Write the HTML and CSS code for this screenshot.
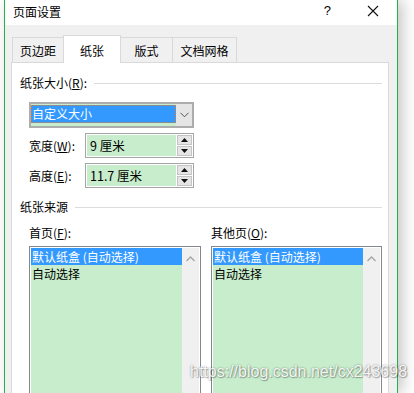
FILE: index.html
```html
<!DOCTYPE html>
<html lang="zh">
<head>
<meta charset="utf-8">
<link rel="stylesheet" href="styles.css">
</head>
<body>
<div class="window">
  <div class="titlebar">
    <span class="title">页面设置</span>
    <span class="help">?</span>
    <svg class="close" width="12" height="12" viewBox="0 0 12 12"><path d="M1 1L11 11M11 1L1 11" stroke="#111" stroke-width="1.1" fill="none"/></svg>
  </div>
  <div class="body">
    <div class="tabs">
      <div class="tab t1">页边距</div>
      <div class="tab active">纸张</div>
      <div class="tab t3">版式</div>
      <div class="tab t4">文档网格</div>
    </div>
    <div class="panel">
      <div class="group-head"><span>纸张大小(<u>R</u>):</span><i class="rule"></i></div>
      <div class="combo">
        <div class="combo-field"><span class="sel">自定义大小</span></div>
        <div class="combo-btn"><svg width="9" height="6" viewBox="0 0 9 6"><path d="M0.5 0.8L4.5 4.8L8.5 0.8" stroke="#555" stroke-width="1" fill="none"/></svg></div>
      </div>
      <div class="spin-row">
        <span class="lbl">宽度(<u>W</u>):</span>
        <div class="spin">
          <div class="spin-field">9 厘米</div>
          <div class="spin-btns">
            <div class="sb"><svg width="7" height="4" viewBox="0 0 7 4"><path d="M3.5 0L7 4H0Z" fill="#111"/></svg></div>
            <div class="sb"><svg width="7" height="4" viewBox="0 0 7 4"><path d="M0 0H7L3.5 4Z" fill="#111"/></svg></div>
          </div>
        </div>
      </div>
      <div class="spin-row">
        <span class="lbl">高度(<u>E</u>):</span>
        <div class="spin">
          <div class="spin-field">11.7 厘米</div>
          <div class="spin-btns">
            <div class="sb"><svg width="7" height="4" viewBox="0 0 7 4"><path d="M3.5 0L7 4H0Z" fill="#111"/></svg></div>
            <div class="sb"><svg width="7" height="4" viewBox="0 0 7 4"><path d="M0 0H7L3.5 4Z" fill="#111"/></svg></div>
          </div>
        </div>
      </div>
      <div class="group-head g2"><span>纸张来源</span><i class="rule"></i></div>
      <div class="sources">
        <div class="src">
          <div class="src-lbl">首页(<u>F</u>):</div>
          <div class="list">
            <div class="items">
              <div class="item on">默认纸盒 (自动选择)</div>
              <div class="item">自动选择</div>
            </div>
            <div class="scroll"><svg width="9" height="6" viewBox="0 0 9 6"><path d="M0.5 5L4.5 1L8.5 5" stroke="#a6a6a6" stroke-width="1.4" fill="none"/></svg></div>
          </div>
        </div>
        <div class="src">
          <div class="src-lbl">其他页(<u>O</u>):</div>
          <div class="list">
            <div class="items">
              <div class="item on">默认纸盒 (自动选择)</div>
              <div class="item">自动选择</div>
            </div>
            <div class="scroll"><svg width="9" height="6" viewBox="0 0 9 6"><path d="M0.5 5L4.5 1L8.5 5" stroke="#a6a6a6" stroke-width="1.4" fill="none"/></svg></div>
          </div>
        </div>
      </div>
    </div>
  </div>
</div>
<div class="watermark">https://blog.csdn.net/cx243698</div>
</body>
</html>
```
FILE: styles.css
```css
* { box-sizing: border-box; }
html, body { margin: 0; padding: 0; }
body {
  background: #fff;
  width: 414px;
  height: 393px;
  overflow: hidden;
  position: relative;
  font-family: "Noto Sans CJK SC", "Microsoft YaHei", sans-serif;
  font-size: 12px;
  color: #000;
}
u { text-decoration: underline; text-underline-offset: 1px; }
.window {
  margin-left: 4px;
  width: 394px;
  height: 393px;
  border-left: 1px solid #22b14c;
  border-right: 1px solid #22b14c;
  box-shadow: 5px 0 14px rgba(0,0,0,0.22);
  background: #f0f0f0;
  overflow: hidden;
}
.titlebar {
  height: 25px;
  background: #fff;
  display: flex;
  align-items: center;
  padding-left: 8px;
  line-height: 16px;
}
.title { flex: 1; margin-top: -2px; }
.help { font-family: "Liberation Sans", sans-serif; font-size: 13px; margin-right: 36px; margin-top: -3px; }
.close { margin-right: 18px; margin-top: -3px; }
.body { padding-top: 10px; }
.tabs {
  display: flex;
  align-items: flex-end;
  padding-left: 7px;
  height: 27px;
}
.tab {
  height: 25px;
  border: 1px solid #d9d9d9;
  border-bottom: none;
  background: #f0f0f0;
  text-align: center;
  line-height: 16px;
  padding-top: 5px;
}
.t1 { width: 52px; }
.active {
  width: 58px;
  height: 28px;
  margin-left: -1px;
  margin-bottom: -1px;
  background: #fff;
  position: relative;
  z-index: 1;
  padding-top: 7px;
}
.t3 { width: 53px; margin-left: -1px; }
.t4 { width: 65px; margin-left: -1px; }
.panel {
  margin-left: 6px;
  width: 378px;
  height: 340px;
  background: #fff;
  border: 1px solid #d9d9d9;
  padding: 12px 6px 0 8px;
}
.group-head {
  display: flex;
  align-items: center;
  height: 16px;
  line-height: 16px;
}
.rule { flex: 1; height: 1px; background: #dcdcdc; margin-left: 7px; }
.combo {
  margin: 11px 0 0 9px;
  width: 165px;
  height: 26px;
  border: 2px solid #adadad;
  background: #c7edcc;
  display: flex;
}
.combo-field { flex: 1; padding: 1px 0 3px 0; }
.sel {
  display: block;
  height: 18px;
  background: #3399ff;
  color: #fff;
  line-height: 17px;
  padding-left: 1px;
  outline: 1px dotted #e07b2b;
  outline-offset: -1px;
}
.combo-btn {
  width: 16px;
  background: #e5e5e5;
  display: flex;
  align-items: center;
  justify-content: center;
}
.spin-row {
  display: flex;
  align-items: center;
  margin: 5px 0 0 9px;
  height: 25px;
}
.lbl { width: 56px; line-height: 16px; }
.spin {
  width: 109px;
  height: 25px;
  border: 1px solid #a5a5a5;
  padding: 1px;
  display: flex;
  background: #fff;
}
.spin-field {
  flex: 1;
  background: #c7edcc;
  line-height: 21px;
  padding-left: 3px;
  font-size: 12.5px;
}
.spin-btns {
  width: 15px;
  margin-left: 1px;
  display: flex;
  flex-direction: column;
  gap: 1px;
}
.sb {
  flex: 1;
  background: #e5e5e5;
  border: 1px solid #c4c4c4;
  display: flex;
  align-items: center;
  justify-content: center;
}
.g2 { margin-top: 11px; }
.sources {
  display: grid;
  grid-template-columns: 172px 171px;
  column-gap: 10px;
  margin: 10px 0 0 9px;
}
.src-lbl { line-height: 16px; height: 16px; }
.list {
  margin-top: 5px;
  height: 160px;
  border: 1px solid #828790;
  padding: 1px;
  display: flex;
  background: #fff;
}
.items { flex: 1; background: #c7edcc; }
.item { height: 17px; line-height: 17px; padding-left: 1px; }
.item.on { background: #3399ff; color: #fff; }
.scroll {
  width: 17px;
  background: #f0f0f0;
  display: flex;
  justify-content: center;
  padding-top: 8px;
}
.scroll svg { display: block; }
.watermark {
  position: absolute;
  left: 190px;
  top: 363px;
  font-family: "Liberation Sans", Arial, sans-serif;
  font-size: 16px;
  color: rgba(255,255,255,0.92);
  text-shadow: 0 0 2px rgba(0,0,0,0.45), 1px 1px 1px rgba(0,0,0,0.25);
  white-space: nowrap;
}
```
